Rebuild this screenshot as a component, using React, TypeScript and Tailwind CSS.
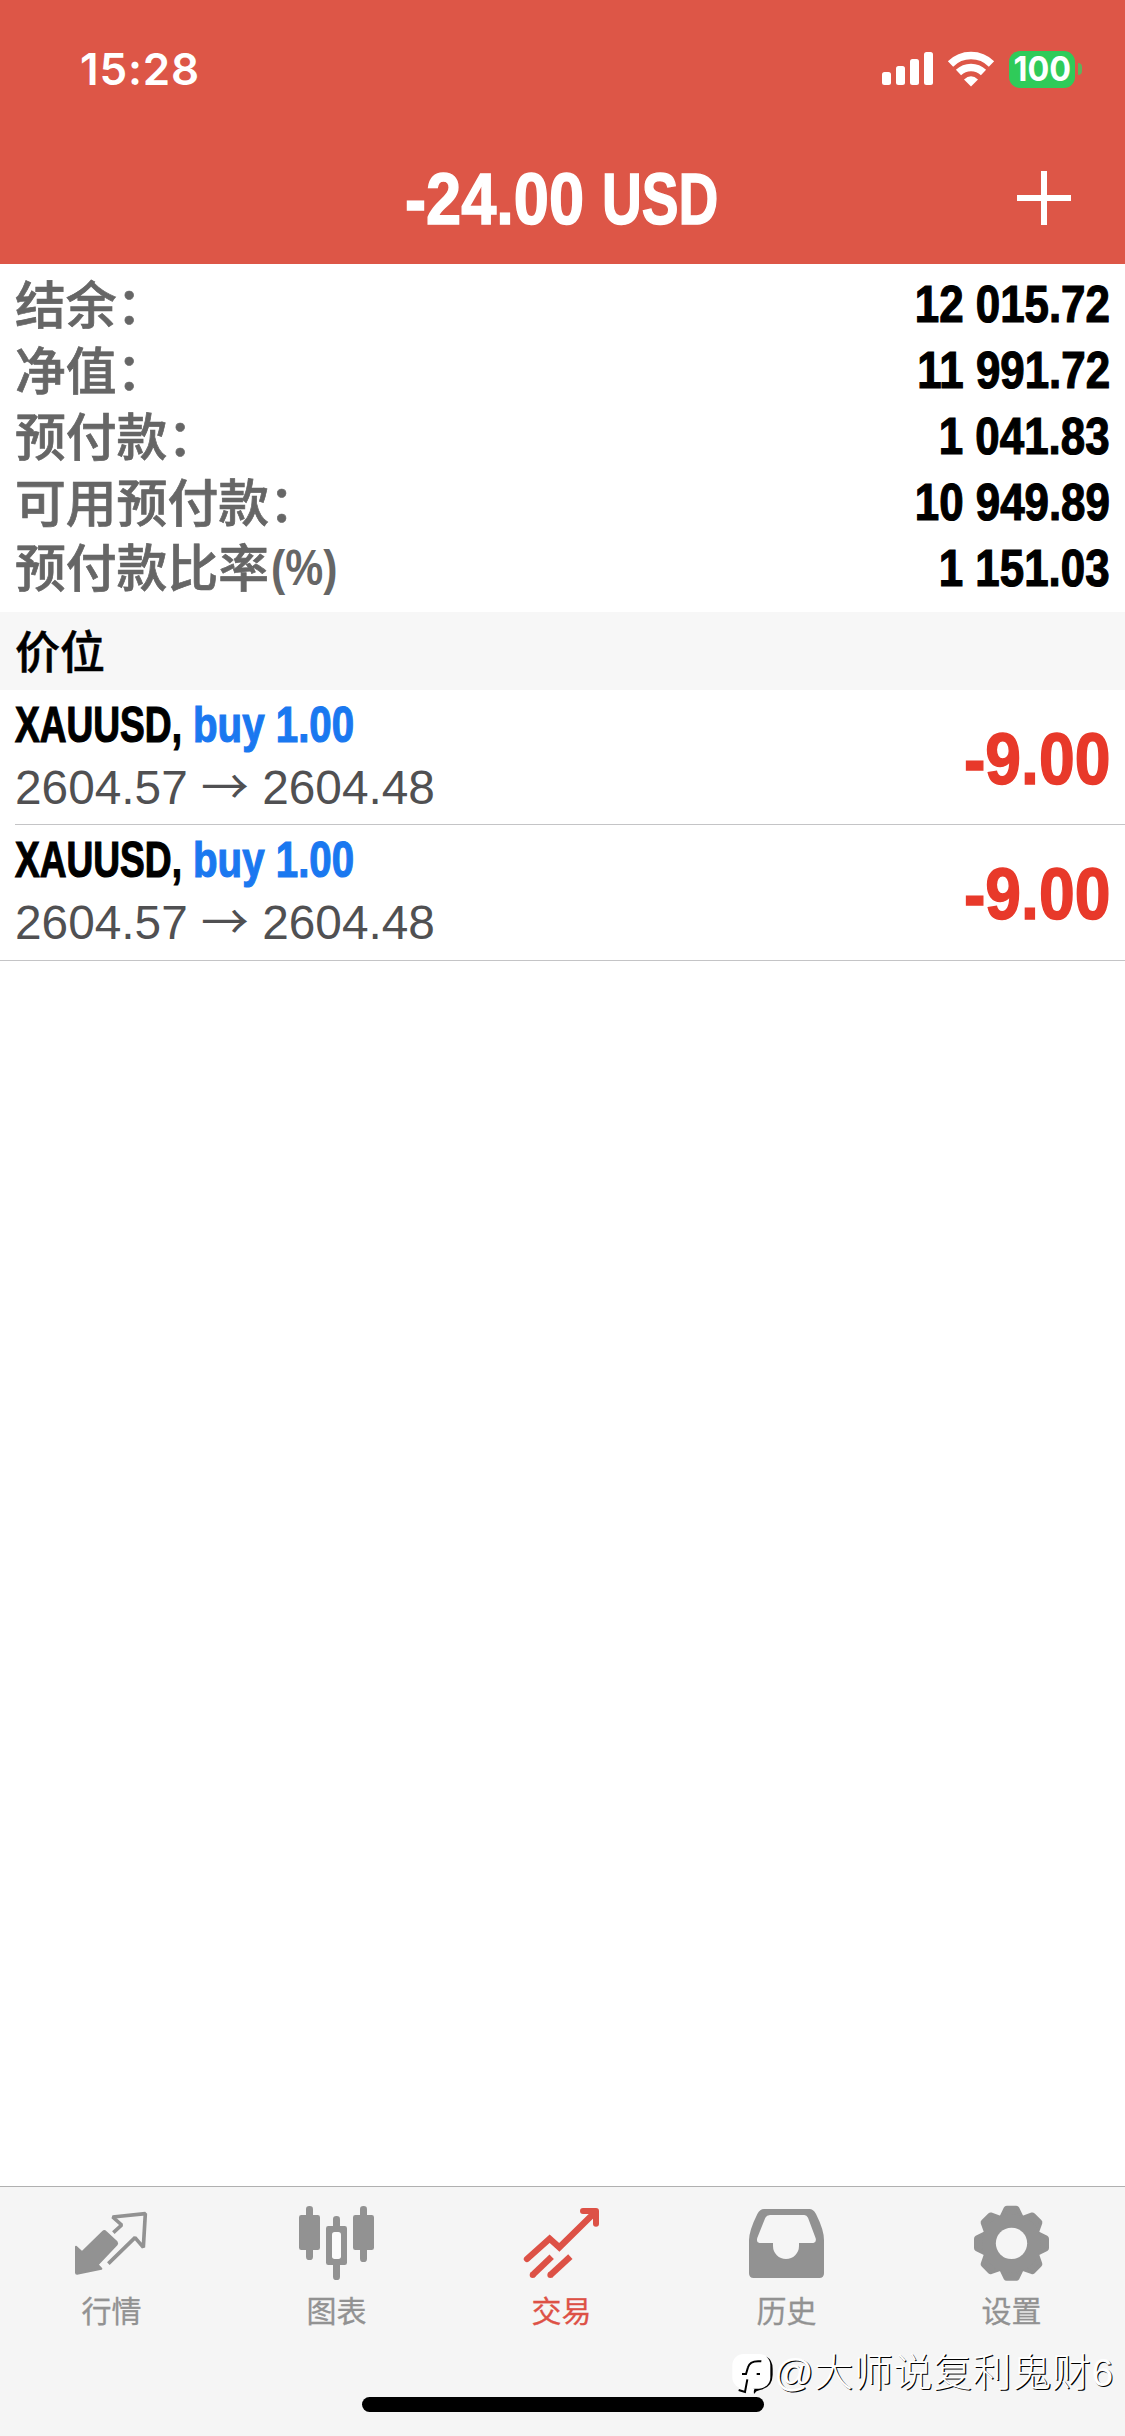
import React from 'react';

const account = [
    { label: '结余：', value: '12 015.72' },
    { label: '净值：', value: '11 991.72' },
    { label: '预付款：', value: '1 041.83' },
    { label: '可用预付款：', value: '10 949.89' },
    { label: '预付款比率', unit: '(%)', value: '1 151.03' },
];

const positions = [
    { id: 1, symbol: 'XAUUSD', side: 'buy 1.00', open: '2604.57', current: '2604.48', profit: '-9.00' },
    { id: 2, symbol: 'XAUUSD', side: 'buy 1.00', open: '2604.57', current: '2604.48', profit: '-9.00' },
];

const QuotesIcon = () => (
    <svg viewBox="0 0 225 225" className="size-[75px] overflow-visible" fill="none">
        <path
            d="M3 125 L21 142 L84 80 Q88 76 92 80 L125 111 Q128 115 125 119 L68 179 L79 191 L6 206 Q3 206 3 203 Z"
            fill="currentColor"
            stroke="currentColor"
            strokeWidth="6"
            strokeLinejoin="round"
        />
        <path d="M115 83 L140 60 L113 36 L211 26 L205 127 L180 98 L100 176" stroke="currentColor" strokeWidth="11" strokeLinejoin="bevel" />
    </svg>
);

const ChartIcon = () => (
    <svg viewBox="0 0 225 225" className="size-[75px] overflow-visible" fill="currentColor">
        <rect x="-3" y="30" width="63" height="105" rx="7" />
        <rect x="18" y="3" width="21" height="162" rx="10" />
        <rect x="99" y="33" width="21" height="192" rx="10" />
        <rect x="78" y="63" width="63" height="117" rx="7" />
        <rect x="96" y="81" width="27" height="81" rx="8" fill="#fbfbfb" />
        <rect x="159" y="30" width="63" height="105" rx="7" />
        <rect x="180" y="3" width="21" height="168" rx="10" />
    </svg>
);

const TradeIcon = () => (
    <svg viewBox="0 0 225 225" className="size-[75px] overflow-visible" fill="none" stroke="currentColor">
        <path d="M6 162 L74 101 L103 127 L210 22" strokeWidth="19" strokeLinecap="round" />
        <path d="M174 18 H213 V56" strokeWidth="18" strokeLinecap="round" strokeLinejoin="round" />
        <path d="M22 211 L80 155" strokeWidth="19" />
        <path d="M75 211 L136 155" strokeWidth="19" />
        <circle cx="23" cy="210" r="9" fill="currentColor" stroke="none" />
        <circle cx="76" cy="210" r="9" fill="currentColor" stroke="none" />
    </svg>
);

const HistoryIcon = () => (
    <svg viewBox="0 0 225 225" className="size-[75px] overflow-visible" fill="currentColor">
        <path
            fillRule="evenodd"
            d="M42 12 H178 Q190 12 198 27 Q222 75 222 105 V205 Q222 219 208 219 H11 Q-3 219 -3 205 V105 Q-2 75 22 27 Q30 12 42 12 Z M60 30 Q50 30 46 38 L22 98 Q18 113 28 114 H69 V123 A39 39 0 0 0 147 123 V114 H190 Q200 113 197 100 L174 38 Q170 30 163 30 Z"
        />
    </svg>
);

const SettingsIcon = () => (
    <svg viewBox="-109.5 -115 225 225" className="size-[75px] overflow-visible" fill="currentColor">
        {[0, 45, 90, 135, 180, 225, 270, 315].map((angle) => (
            <path
                key={angle}
                d="M-32 -76 L-18 -105 Q-17 -107 -14 -107 H14 Q17 -107 18 -105 L32 -76 Z"
                transform={`rotate(${angle})`}
                stroke="currentColor"
                strokeWidth="11"
                strokeLinejoin="round"
            />
        ))}
        <circle r="88" />
        <circle r="47" fill="#f5f5f5" />
    </svg>
);

const tabs = [
    { label: '行情', icon: QuotesIcon },
    { label: '图表', icon: ChartIcon },
    { label: '交易', icon: TradeIcon, active: true },
    { label: '历史', icon: HistoryIcon },
    { label: '设置', icon: SettingsIcon },
];

const StatusBar = () => (
    <div className="flex h-[138px] items-center justify-between pl-[80px] pr-[43px]">
        <span className="font-[Inter,sans-serif] text-[44px] font-semibold tracking-[0.8px]">15:28</span>
        <div className="flex items-center">
            <svg width="52" height="34" viewBox="0 0 52 34" fill="currentColor" className="mr-[14px]">
                <rect x="0" y="20" width="9" height="13" rx="2.5" />
                <rect x="14" y="14" width="9" height="19" rx="2.5" />
                <rect x="28" y="7" width="9" height="26" rx="2.5" />
                <rect x="42" y="0" width="9" height="33" rx="2.5" />
            </svg>
            <svg width="46" height="34" viewBox="0 0 46 34" fill="none" stroke="currentColor" className="mr-[15px] overflow-visible">
                <path d="M2.5 12 A29 29 0 0 1 43.5 12" strokeWidth="7.5" />
                <path d="M10.5 20.5 A18 18 0 0 1 35.5 20.5" strokeWidth="7.5" />
                <path d="M23 34.5 L16 27.5 Q23 21 30 27.5 Z" fill="currentColor" stroke="none" />
            </svg>
            <div className="flex h-[37px] w-[66px] items-center justify-center rounded-[11px] bg-[#2fcb59] font-[Inter,sans-serif] text-[34px] font-bold leading-none">
                <span className="scale-x-[.95]">100</span>
            </div>
            <div className="ml-[3px] h-[12px] w-[4px] rounded-r-full bg-[#5fb25c]" />
        </div>
    </div>
);

const Header = () => (
    <header className="h-[264px] bg-[#dd5647] text-white">
        <StatusBar />
        <div className="grid h-[120px] grid-cols-[1fr_auto_1fr] items-center">
            <span />
            <h1 className="flex whitespace-nowrap pr-[2px] text-[73px] font-bold leading-none [-webkit-text-stroke:1.5px_currentColor]">
                <span className="-mr-[10px] origin-left scale-x-[.865]">-24.00</span>
                <span className="-mr-[38px] origin-left scale-x-[.755]">USD</span>
            </h1>
            <svg width="54" height="54" viewBox="0 0 54 54" stroke="currentColor" strokeWidth="6" className="mr-[54px] justify-self-end">
                <path d="M0 27 H54 M27 0 V54" />
            </svg>
        </div>
    </header>
);

const TabBar = () => (
    <nav className="flex h-[250px] flex-col items-center border-t border-[#b0b0b0] bg-[#f5f5f5]">
        <div className="grid w-full grid-cols-5 pt-[18px]">
            {tabs.map(({ label, icon: Icon, active }) => (
                <div key={label} className={`flex flex-col items-center ${active ? 'text-[#dd5146]' : 'text-[#929292]'}`}>
                    <Icon />
                    <span className="mr-[2px] mt-[12px] text-[30px] leading-[40px] [-webkit-text-stroke:0.3px_currentColor]">{label}</span>
                </div>
            ))}
        </div>
        <div className="mt-[65px] h-[15px] w-[402px] rounded-full bg-black" />
    </nav>
);

const Watermark = () => (
    <div className="absolute left-[732px] top-[2350px] flex items-center text-white">
        <svg width="42" height="46" viewBox="0 0 126 138">
            <path d="M66 132 Q72 122 84 120 Q122 112 122 74 V56 Q122 30 104 20 L60 60 Z" fill="#000" />
            <rect x="1" y="12" width="114" height="104" rx="34" fill="#fff" />
            <path d="M30 92 L42 116 H68 L60 132 L20 118 Z" fill="#fff" />
            <path d="M88 34 Q54 30 48 52 L42 72 H30 M46 88 L39 126 L20 120 M74 72 H84" fill="none" stroke="#000" strokeWidth="6" />
        </svg>
        <span className="whitespace-nowrap text-[39px] font-light leading-[46px] tracking-[0.6px] [text-shadow:1.2px_1.2px_0_#000]">@大师说复利鬼财6</span>
    </div>
);

export default function App() {
    return (
        <div className="relative flex h-[2436px] w-[1125px] flex-col overflow-hidden bg-white font-['Liberation_Sans','Noto_Sans_CJK_SC',sans-serif] text-black">
            <Header />

            <section className="h-[348px] pl-[15px] pr-[15px] pt-[5px]">
                {account.map(({ label, unit, value }) => (
                    <div key={label} className="flex h-[66px] items-center justify-between">
                        <span className="flex whitespace-nowrap font-['Noto_Sans_CJK_SC',sans-serif] text-[50.8px] font-medium leading-[66px] text-[#666] [-webkit-text-stroke:0.7px_currentColor]">
                            {label}
                            {unit && (
                                <span className="ml-[2px] origin-left scale-x-[.84] pt-[3px] font-['Liberation_Sans',sans-serif] font-bold [-webkit-text-stroke:0px]">
                                    {unit}
                                </span>
                            )}
                        </span>
                        <span className="origin-right scale-x-[.86] pt-[5px] text-[51px] font-bold leading-[66px] [-webkit-text-stroke:1.2px_currentColor]">
                            {value}
                        </span>
                    </div>
                ))}
            </section>

            <div className="flex h-[78px] items-center bg-[#f7f7f7] pl-[15px] pt-[5px] text-[45px] font-medium [-webkit-text-stroke:0.5px_currentColor]">价位</div>

            <main className="flex-1">
                {positions.map((p, i) => (
                    <div key={p.id} className={i === positions.length - 1 ? 'border-b border-[#c4c4c6]' : 'pl-[15px]'}>
                        <div
                            className={
                                i === positions.length - 1
                                    ? 'flex h-[135px] items-center justify-between pl-[15px] pr-[15px]'
                                    : 'flex h-[135px] items-center justify-between border-b border-[#c4c4c6] pr-[15px]'
                            }
                        >
                            <div className="pb-[2px]">
                                <div className="flex whitespace-pre text-[50px] font-bold leading-[63px] [-webkit-text-stroke:1.2px_currentColor]">
                                    <span className="-mr-[61px] origin-left scale-x-[.742]">{p.symbol}, </span>
                                    <span className="origin-left scale-x-[.805] text-[#1a78f0]">{p.side}</span>
                                </div>
                                <div className="whitespace-nowrap text-[47.8px] leading-[62px] text-[#505052]">
                                    {p.open} <span className="font-['Noto_Sans_CJK_SC',sans-serif] leading-none">→</span> {p.current}
                                </div>
                            </div>
                            <span className="origin-right scale-x-[.88] pt-[2px] text-[73px] font-bold leading-none text-[#e8392a] [-webkit-text-stroke:1.5px_currentColor]">
                                {p.profit}
                            </span>
                        </div>
                    </div>
                ))}
            </main>

            <TabBar />
            <Watermark />
        </div>
    );
}
